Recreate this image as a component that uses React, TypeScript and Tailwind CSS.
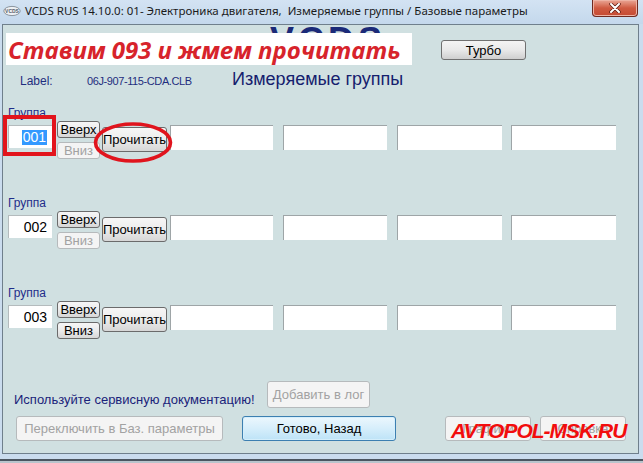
import React from 'react';

const sans = "font-['Liberation_Sans',Arial,sans-serif]";

type Kind = 'classic' | 'win7' | 'off' | 'focus';

const kinds: Record<Kind, string> = {
  classic: 'border border-[#6b6b6b] bg-linear-to-b from-[#f6f6f6] via-[#ececec] to-[#d6d6d6] text-black',
  win7: 'border border-[#707070] bg-linear-to-b from-[#f4f4f4] via-[#e9e9e9] to-[#cfcfcf] text-black',
  off: 'border border-[#b6babc] bg-[#f4f4f4] text-[#a2a2a2]',
  focus:
    'border border-[#3c7fb1] bg-linear-to-b from-[#ecf7fd] via-[#d6eefb] to-[#bde3f7] text-black shadow-[inset_0_0_0_1px_#d4eefb]',
};

function Btn({
  kind = 'classic',
  className = '',
  children,
}: {
  kind?: Kind;
  className?: string;
  children?: React.ReactNode;
}) {
  return (
    <div className={`flex items-center justify-center rounded-[3px] leading-none ${kinds[kind]} ${className}`}>
      {children}
    </div>
  );
}

const field = 'h-[25px] bg-white border-t border-l border-[#9ea5a7]';

function Group({ num, downOff, first }: { num: string; downOff?: boolean; first?: boolean }) {
  return (
    <div className="h-[90px]">
      <div className="ml-[5px] h-[14px] text-[12px] leading-[14px] text-[#1f2d8a]">Группа</div>
      <div className="mt-[5px] flex items-start">
        <div className="ml-[5px] w-[44px] h-[23px] bg-white border-t border-l border-[#b4bbbd] flex items-center justify-end pr-[5px] text-[14px] text-black">
          {first ? <span className="bg-[#3399ff] text-white px-[1px] leading-[15px]">{num}</span> : num}
        </div>
        <div className="ml-[5px] -mt-[4px] flex flex-col gap-[4px] w-[43px]">
          <Btn className="h-[17px] text-[13px]">Вверх</Btn>
          <Btn kind={downOff ? 'off' : 'classic'} className="h-[17px] text-[13px]">
            Вниз
          </Btn>
        </div>
        <Btn className="ml-[2px] mt-[2px] w-[65px] h-[25px] text-[13px]">Прочитать</Btn>
        <div className={`ml-[3px] w-[103px] ${field}`} />
        <div className={`ml-[10px] w-[104px] ${field}`} />
        <div className={`ml-[10px] w-[105px] ${field}`} />
        <div className={`ml-[9px] w-[105px] ${field}`} />
      </div>
    </div>
  );
}

function AppIcon() {
  return (
    <svg width="18" height="12" viewBox="0 0 18 12">
      <ellipse cx="9" cy="6" rx="8.2" ry="4.6" fill="#eef1f4" stroke="#8a949e" strokeWidth="1" />
      <text x="9" y="7.8" textAnchor="middle" fontSize="5" fontWeight="bold" fill="#58626c" fontFamily="Arial">
        VCDS
      </text>
    </svg>
  );
}

export default function App() {
  return (
    <div className={`w-[643px] h-[463px] overflow-hidden bg-[#cadcee] ${sans}`}>
      {/* Title bar */}
      <div className="h-[24px] flex items-start justify-between bg-linear-to-b from-[#d3e3f3] to-[#c4d8ec]">
        <div className="flex items-center h-[21px]">
          <div className="ml-[3px] w-[18px]">
            <AppIcon />
          </div>
          <span className="ml-[4px] text-[11.5px] font-['Noto_Sans',sans-serif] text-[#1b1b1b] whitespace-pre">
            VCDS RUS 14.10.0: 01- Электроника двигателя,  Измеряемые группы / Базовые параметры
          </span>
        </div>
        <div className="mr-[5px] w-[46px] h-[17px] rounded-b-[4px] border border-t-0 border-[#6e2a20] bg-linear-to-b from-[#e9a696] via-[#cf5a41] to-[#c54a32] flex items-center justify-center shadow-[inset_0_0_0_1px_#eeb3a4]">
          <svg width="12" height="10" viewBox="0 0 12 10">
            <path d="M2 1 L10 9 M10 1 L2 9" stroke="#5a1a12" strokeWidth="3.4" strokeLinecap="round" />
            <path d="M2 1 L10 9 M10 1 L2 9" stroke="#ffffff" strokeWidth="2" strokeLinecap="round" />
          </svg>
        </div>
      </div>

      {/* Client area */}
      <div className="ml-[2px] w-[637px] h-[430px] border border-[#6f7f8c] bg-[#d0e0e1] relative overflow-hidden">
        {/* big logo text behind the note */}
        <div className="absolute left-[267px] -top-[2px] text-[36px] leading-none font-bold tracking-[4px] text-[#1b2a78]">
          VCDS
        </div>

        {/* Header */}
        <div className="mt-[8px] flex items-start relative">
          <div className="ml-[3px] w-[406px] h-[32px] bg-white pt-[1px] pl-[2px] text-[24px] leading-[32px] font-bold italic text-[#d7232b] font-['Open_Sans',sans-serif] whitespace-nowrap">
            Ставим 093 и жмем прочитать
          </div>
          <Btn kind="win7" className="ml-[29px] mt-[7px] w-[85px] h-[20px] text-[13px]">
            Турбо
          </Btn>
        </div>

        {/* Label row */}
        <div className="mt-[5px] h-[18px] flex items-baseline">
          <div className="ml-[17px] w-[67px] text-[12px] text-[#1f2d7e]">Label:</div>
          <div className="w-[145px] text-[11px] tracking-[-0.4px] text-[#1f2d7e]">06J-907-115-CDA.CLB</div>
          <div className="text-[18px] leading-[18px] text-[#15206e]">Измеряемые группы</div>
        </div>

        {/* Groups */}
        <div className="mt-[18px]">
          <Group num="001" downOff first />
          <Group num="002" downOff />
          <Group num="003" />
        </div>

        {/* Bottom */}
        <div className="mt-[5px] flex items-end">
          <div className="ml-[11px] w-[253px] text-[13px] leading-[16px] text-[#1a237a] whitespace-nowrap">
            Используйте сервисную документацию!
          </div>
          <Btn kind="off" className="w-[103px] h-[27px] text-[13px]">
            Добавить в лог
          </Btn>
        </div>
        <div className="mt-[8px] flex items-start">
          <Btn kind="off" className="ml-[13px] w-[207px] h-[25px] text-[13px]">
            Переключить в Баз. параметры
          </Btn>
          <Btn kind="focus" className="ml-[19px] w-[154px] h-[25px] text-[13px]">
            Готово, Назад
          </Btn>
          <Btn kind="off" className="ml-[49px] w-[86px] h-[25px] text-[13px]">
            Графики
          </Btn>
          <Btn kind="off" className="ml-[9px] w-[86px] h-[25px] text-[13px]">
            Справка
          </Btn>
        </div>

        {/* Annotations */}
        <div className="absolute left-[0px] top-[90px] w-[53px] h-[41px] border-[4px] border-[#e2141c]" />
        <svg className="absolute left-[90px] top-[97px]" width="80" height="41" viewBox="0 0 80 41">
          <ellipse cx="40" cy="20.5" rx="37.5" ry="18.5" fill="none" stroke="#e0141d" strokeWidth="3.6" />
        </svg>
        <div className="absolute left-[448px] top-[395px] text-[21px] leading-[21px] font-bold italic tracking-[-1px] text-[#f20d0d] whitespace-nowrap">
          AVTOPOL-MSK.RU
        </div>
      </div>

      {/* Bottom frame */}
      <div className="h-[5px]" />
      <div className="h-[2px] bg-[#4b5560]" />
      <div className="h-[4px] bg-[#b9c4cc]" />
    </div>
  );
}
